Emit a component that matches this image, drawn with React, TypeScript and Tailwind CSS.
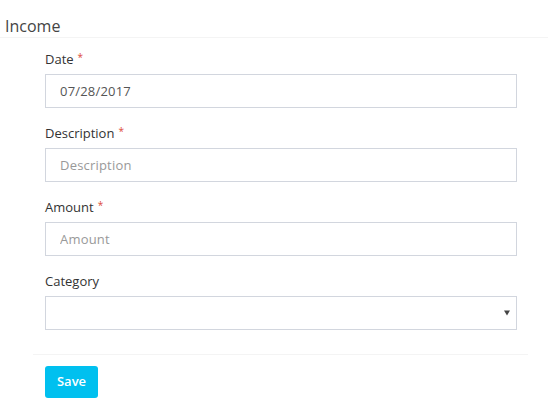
import React from "react";

function Label({ text, required }: { text: string; required?: boolean }) {
  return (
    <label className="block h-[20px] leading-[20px] mb-[5px] text-[13px] text-[#333]">
      {text}
      {required && (
        <span className="text-[#dd4b39] ml-[4px] text-[10px] align-top leading-[16px]">*</span>
      )}
    </label>
  );
}

function Input({ value, placeholder }: { value?: string; placeholder?: string }) {
  return (
    <input
      readOnly
      defaultValue={value}
      placeholder={placeholder}
      className="block w-full h-[34px] border border-[#d2d6de] px-[14px] text-[13px] text-[#555] placeholder:text-[#999] outline-none bg-white tracking-[0.2px]"
    />
  );
}

export default function App() {
  return (
    <div className="w-[548px] h-[419px] bg-white font-['Open_Sans',sans-serif]">
      <div className="h-[38px] border-b border-[#f4f4f4] pl-[5px] pt-[16px]">
        <h3 className="text-[16px] leading-[20px] text-[#444]">Income</h3>
      </div>
      <div className="pl-[45px] pr-[31px] pt-[11px]">
        <div className="mb-[15px]">
          <Label text="Date" required />
          <Input value="07/28/2017" />
        </div>
        <div className="mb-[15px]">
          <Label text="Description" required />
          <Input placeholder="Description" />
        </div>
        <div className="mb-[15px]">
          <Label text="Amount" required />
          <Input placeholder="Amount" />
        </div>
        <div>
          <Label text="Category" />
          <div className="relative h-[34px] border border-[#d2d6de] bg-white">
            <svg
              className="absolute right-[6px] top-[13px]"
              width="6"
              height="6"
              viewBox="0 0 6 6"
            >
              <polygon points="0,0.5 6,0.5 3,5.5" fill="#444" />
            </svg>
          </div>
        </div>
      </div>
      <div className="ml-[33px] mr-[20px] mt-[24px] border-t border-[#f4f4f4]" />
      <div className="pl-[45px] pt-[11px]">
        <button className="w-[53px] h-[32px] rounded-[3px] bg-[#00c0ef] text-white text-[13px] font-semibold">
          Save
        </button>
      </div>
    </div>
  );
}
